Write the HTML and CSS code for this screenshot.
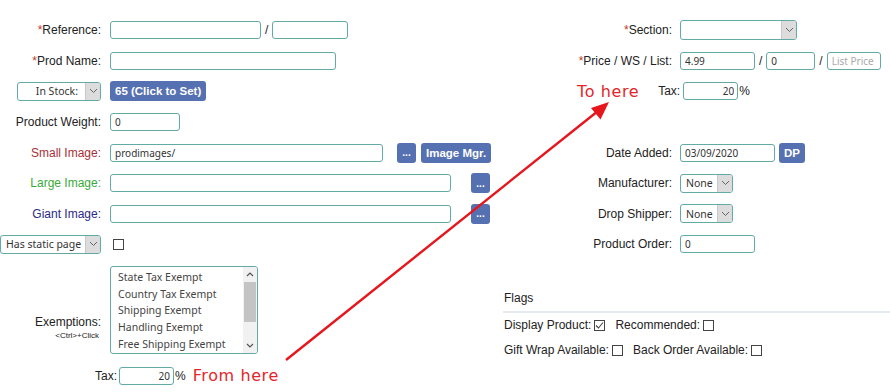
FILE: index.html
```html
<!DOCTYPE html>
<html lang="en">
<head>
    <meta charset="UTF-8">
    <meta name="viewport" content="width=device-width, initial-scale=1.0">
    <title>Edit Product</title>
    <link rel="stylesheet" href="styles.css">
</head>
<body>
<div class="page">
    <div class="col-left">
        <div class="grid">
            <div class="lbl"><span class="req">*</span>Reference:</div>
            <div class="val">
                <input class="txt w151" type="text">
                <span class="sep">/</span>
                <input class="txt w76" type="text">
            </div>

            <div class="lbl"><span class="req">*</span>Prod Name:</div>
            <div class="val"><input class="txt w226" type="text"></div>

            <div class="lbl">
                <div class="sel w84"><span class="sel-text right">In Stock:</span><span class="sel-arrow"><svg width="9" height="6" viewBox="0 0 9 6"><polyline points="1,1 4.5,4.5 8,1" fill="none" stroke="#666" stroke-width="1"/></svg></span></div>
            </div>
            <div class="val"><button class="btn">65 (Click to Set)</button></div>

            <div class="lbl">Product Weight:</div>
            <div class="val"><input class="txt w70" type="text" value="0"></div>

            <div class="lbl small-img">Small Image:</div>
            <div class="val">
                <input class="txt w273" type="text" value="prodimages/">
                <button class="btn dots gap14">...</button>
                <button class="btn gap5">Image Mgr.</button>
            </div>

            <div class="lbl large-img">Large Image:</div>
            <div class="val">
                <input class="txt w341" type="text">
                <button class="btn dots gap20">...</button>
            </div>

            <div class="lbl giant-img">Giant Image:</div>
            <div class="val">
                <input class="txt w341" type="text">
                <button class="btn dots gap20">...</button>
            </div>

            <div class="lbl">
                <div class="sel w101"><span class="sel-text">Has static page</span><span class="sel-arrow"><svg width="9" height="6" viewBox="0 0 9 6"><polyline points="1,1 4.5,4.5 8,1" fill="none" stroke="#666" stroke-width="1"/></svg></span></div>
            </div>
            <div class="val"><span class="cb ml3"></span></div>
        </div>

        <div class="exempt-row">
            <div class="exempt-lbl">
                <span>Exemptions:</span>
                <span class="hint">&lt;Ctrl&gt;+Click</span>
            </div>
            <div class="listbox">
                <ul class="items">
                    <li>State Tax Exempt</li>
                    <li>Country Tax Exempt</li>
                    <li>Shipping Exempt</li>
                    <li>Handling Exempt</li>
                    <li>Free Shipping Exempt</li>
                </ul>
                <div class="scroll">
                    <span class="scroll-btn"><svg width="8" height="5" viewBox="0 0 8 5"><polyline points="1,4 4,1 7,4" fill="none" stroke="#555" stroke-width="1.2"/></svg></span>
                    <span class="thumb"></span>
                    <span class="track"></span>
                    <span class="scroll-btn"><svg width="8" height="5" viewBox="0 0 8 5"><polyline points="1,1 4,4 7,1" fill="none" stroke="#555" stroke-width="1.2"/></svg></span>
                </div>
            </div>
        </div>

        <div class="tax-left">
            <span>Tax:</span>
            <input class="txt w55 num" type="text" value="20">
            <span class="pct">%</span>
            <span class="note from">From here</span>
        </div>
    </div>

    <div class="col-right">
        <div class="grid">
            <div class="lbl"><span class="req">*</span>Section:</div>
            <div class="val">
                <div class="sel w117 tall"><span class="sel-text"></span><span class="sel-arrow"><svg width="9" height="6" viewBox="0 0 9 6"><polyline points="1,1 4.5,4.5 8,1" fill="none" stroke="#666" stroke-width="1"/></svg></span></div>
            </div>

            <div class="lbl"><span class="req">*</span>Price / WS / List:</div>
            <div class="val">
                <input class="txt w75" type="text" value="4.99">
                <span class="sep">/</span>
                <input class="txt w49" type="text" value="0">
                <span class="sep">/</span>
                <input class="txt w54" type="text" placeholder="List Price">
            </div>

            <div class="tax-right">
                <span class="note to">To here</span>
                <span>Tax:</span>
                <input class="txt w55 num" type="text" value="20">
                <span class="pct">%</span>
            </div>

            <div class="empty"></div>

            <div class="lbl">Date Added:</div>
            <div class="val">
                <input class="txt w95" type="text" value="03/09/2020">
                <button class="btn gap4">DP</button>
            </div>

            <div class="lbl">Manufacturer:</div>
            <div class="val">
                <div class="sel w53"><span class="sel-text">None</span><span class="sel-arrow"><svg width="9" height="6" viewBox="0 0 9 6"><polyline points="1,1 4.5,4.5 8,1" fill="none" stroke="#666" stroke-width="1"/></svg></span></div>
            </div>

            <div class="lbl">Drop Shipper:</div>
            <div class="val">
                <div class="sel w53"><span class="sel-text">None</span><span class="sel-arrow"><svg width="9" height="6" viewBox="0 0 9 6"><polyline points="1,1 4.5,4.5 8,1" fill="none" stroke="#666" stroke-width="1"/></svg></span></div>
            </div>

            <div class="lbl">Product Order:</div>
            <div class="val"><input class="txt w75" type="text" value="0"></div>
        </div>

        <div class="flags">
            <div class="flags-head">Flags</div>
            <div class="flag-row">
                <span>Display Product:</span>
                <span class="cb checked"><svg width="11" height="11" viewBox="0 0 11 11"><polyline points="2,5.5 4.5,8 9,2.5" fill="none" stroke="#444" stroke-width="1.1"/></svg></span>
                <span class="ml7">Recommended:</span>
                <span class="cb"></span>
            </div>
            <div class="flag-row">
                <span>Gift Wrap Available:</span>
                <span class="cb"></span>
                <span class="ml7">Back Order Available:</span>
                <span class="cb"></span>
            </div>
        </div>
    </div>

    <svg class="arrow" width="890" height="392" viewBox="0 0 890 392">
        <line x1="286" y1="360" x2="598" y2="111" stroke="#e5161c" stroke-width="2.4"/>
        <polygon points="609,102 600.5,119.5 591,108" fill="#e5161c"/>
    </svg>
</div>
</body>
</html>
```

FILE: styles.css
```css
body { margin: 0; font-family: "Liberation Sans", Arial, sans-serif; font-size: 12px; color: #222; background: #fff; }
.page { position: relative; display: flex; height: 392px; overflow: hidden; }
.col-left { width: 503px; padding-top: 15px; }
.col-right { flex: 1; padding-top: 15px; }

.grid { display: grid; grid-template-columns: 101px 1fr; column-gap: 9px; grid-auto-rows: 30.6px; align-items: center; }
.col-right .grid { grid-template-columns: 169px 1fr; column-gap: 8px; }
.lbl { text-align: right; white-space: nowrap; display: flex; justify-content: flex-end; align-items: center; }
.val { display: flex; align-items: center; }
.empty { grid-column: 1 / -1; }
.req { color: #c0392b; }
.small-img { color: #a8303a; }
.large-img { color: #3aa93a; }
.giant-img { color: #2b2a86; }
.sep { margin: 0 4px; }

.txt { box-sizing: border-box; height: 18px; border: 1px solid #62aaa5; border-radius: 3px; padding: 0 4px; font-family: "Noto Sans", sans-serif; font-size: 10px; color: #333; background: #fff; outline: none; }
.txt::placeholder { color: #aaa; }
.num { text-align: right; padding-right: 3px; }
.w49 { width: 49px; } .w54 { width: 54px; } .w55 { width: 55px; } .w70 { width: 70px; }
.w75 { width: 75px; } .w76 { width: 76px; } .w95 { width: 95px; } .w151 { width: 151px; }
.w226 { width: 226px; } .w273 { width: 273px; } .w341 { width: 341px; }

.btn { height: 20px; padding: 0 5px; border: none; border-radius: 3px; background: #5671b2; color: #fff; font-family: "Liberation Sans", Arial, sans-serif; font-size: 11.5px; font-weight: bold; cursor: pointer; }
.btn.dots { width: 19px; padding: 0; font-size: 10px; }
.gap4 { margin-left: 4px; } .gap5 { margin-left: 5px; } .gap14 { margin-left: 14px; } .gap20 { margin-left: 20px; }

.sel { box-sizing: border-box; display: flex; height: 19px; border: 1px solid #62aaa5; border-radius: 3px; background: #fff; font-family: "Noto Sans", sans-serif; font-size: 10.5px; color: #333; overflow: hidden; }
.sel.tall { height: 20px; }
.w53 { width: 53px; } .w84 { width: 84px; } .w101 { width: 101px; } .w117 { width: 117px; }
.sel-text { flex: 1; display: flex; align-items: center; padding-left: 5px; white-space: nowrap; }
.sel-text.right { justify-content: flex-end; padding-right: 7px; }
.sel-arrow { width: 14px; display: flex; align-items: center; justify-content: center; background: #dcdcdc; border-left: 1px solid #c8c8c8; }

.cb { box-sizing: border-box; display: inline-flex; width: 11px; height: 11px; border: 1px solid #444; background: #fff; }
.cb svg { margin: -1px; }
.ml3 { margin-left: 3px; }
.ml7 { margin-left: 7px; }

.exempt-row { display: grid; grid-template-columns: 101px 148px; column-gap: 9px; margin-top: 6px; }
.exempt-lbl { display: flex; flex-direction: column; align-items: flex-end; justify-content: flex-end; padding-bottom: 14px; }
.hint { font-size: 8px; margin-right: 2px; margin-top: 2px; }
.listbox { box-sizing: border-box; display: flex; height: 88px; border: 1px solid #62aaa5; border-radius: 3px; overflow: hidden; }
.items { flex: 1; list-style: none; margin: 0; padding: 2px 0 0 7px; font-family: "Noto Sans", sans-serif; font-size: 10.5px; line-height: 16.8px; color: #444; white-space: nowrap; overflow: hidden; }
.scroll { width: 14px; display: flex; flex-direction: column; background: #f1f1f1; }
.scroll-btn { height: 15px; display: flex; align-items: center; justify-content: center; }
.thumb { height: 40px; margin: 0 1px; background: #c4c4c4; }
.track { flex: 1; }

.tax-left { display: flex; align-items: center; margin-top: 13px; padding-left: 95px; height: 18px; }
.tax-left .txt { margin-left: 2px; }
.pct { margin-left: 1px; }
.note { font-family: "DejaVu Sans", sans-serif; font-size: 16px; color: #e3262b; letter-spacing: 0.6px; }
.from { margin-left: 7px; }
.tax-right { grid-column: 1 / -1; display: flex; align-items: center; padding-left: 74px; }
.tax-right .note { margin-right: 19px; }
.tax-right .txt { margin-left: 3px; }

.flags { margin-top: 30px; }
.flags-head { padding: 0 0 5px 1px; line-height: 16px; border-bottom: 2px solid #e5eaf1; }
.flag-row { display: flex; align-items: center; gap: 3px; height: 25px; padding-left: 1px; }

.arrow { position: absolute; left: 0; top: 0; pointer-events: none; }
```
